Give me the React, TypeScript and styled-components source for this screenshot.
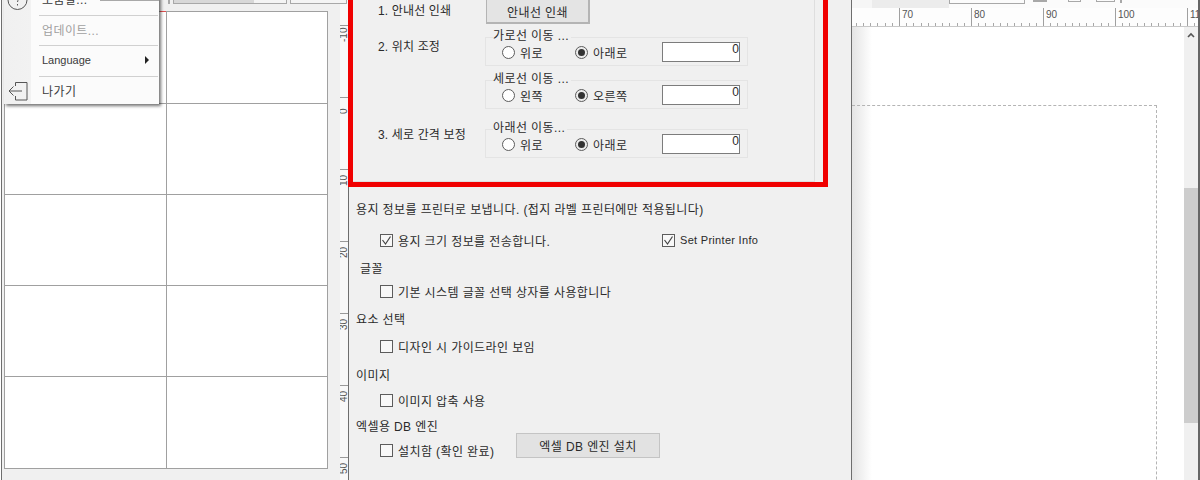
import React from "react";
import styled, { createGlobalStyle } from "styled-components";

const GlobalStyle = createGlobalStyle`
  html, body {
    margin: 0;
    padding: 0;
    background: #fff;
  }

  body {
    font-family: "Liberation Sans", "Noto Sans CJK KR", sans-serif;
    font-size: 12px;
    color: #2a2a2a;
    letter-spacing: 0.4px;
  }
`;

const Page = styled.div`
  width: 1200px;
  height: 480px;
  display: flex;
  overflow: hidden;
`;

/* left pane: label sheet preview */
const LeftPane = styled.section`
  position: relative;
  z-index: 1;
  width: 338px;
  margin-left: 1px;
  flex: none;
  border-left: 1px solid #6e6e6e;
  background: #f0f0f0;
`;

const TopBar = styled.div`
  height: 4px;
  display: flex;
  gap: 3px;
  padding-left: 166px;
`;

const TopBox = styled.div<{ $width: number; $fill?: string }>`
  width: ${(p) => p.$width}px;
  flex: none;
  box-sizing: border-box;
  border: 1px solid #a8a8a8;
  border-top: none;
  background: ${(p) => p.$fill || "#f4f4f4"};
`;

const SheetGrid = styled.div`
  position: relative;
  width: 324px;
  margin: 7px 0 0 2px;
  box-sizing: border-box;
  padding: 1px;
  display: grid;
  grid-template-columns: 161px 160px;
  grid-template-rows: 91px 90px 90px 90px 91px;
  gap: 1px;
  background: #a0a0a0;

  &::before {
    content: "";
    position: absolute;
    top: 0;
    left: 156px;
    width: 6px;
    height: 1px;
    background: #e05050;
  }
`;

const SheetCell = styled.div`
  background: #fff;
`;

const Menu = styled.div`
  position: absolute;
  left: 2px;
  top: -15px;
  width: 155px;
  height: 119px;
  overflow: hidden;
  background: linear-gradient(to right, #f0f0f0 0, #f2f2f2 27px, #fbfbfb 27px);
  box-shadow: 2px 2px 3px rgba(0, 0, 0, 0.55);
`;

const MenuTab = styled.div`
  position: absolute;
  left: 98px;
  top: 0;
  width: 59px;
  height: 1px;
  background: #a8a8a8;
`;

const MenuItem = styled.div<{ $disabled?: boolean }>`
  height: 29.5px;
  box-sizing: border-box;
  padding-bottom: 2px;
  display: flex;
  align-items: center;
  color: ${(p) => (p.$disabled ? "#a0a0a0" : "#3a3a3a")};
`;

const MenuIcon = styled.span`
  width: 22px;
  height: 22px;
  margin: 0 14px 0 2px;
  flex: none;
  display: flex;
  align-items: center;
  justify-content: center;
`;

const MenuArrow = styled.span`
  margin-left: auto;
  margin-right: 10px;
  width: 0;
  height: 0;
  border-left: 4px solid #222;
  border-top: 4px solid transparent;
  border-bottom: 4px solid transparent;
`;

const MenuSeparator = styled.div`
  height: 1px;
  margin: 0 1px 0 35px;
  background: #d0d0d0;
`;

const LatinText = styled.span<{ $spacing: number }>`
  font-size: 11px;
  letter-spacing: ${(p) => p.$spacing}px;
`;

const VerticalRuler = styled.div`
  width: 9px;
  flex: none;
  box-sizing: border-box;
  padding-top: 25px;
  overflow: hidden;
  border-right: 1px solid #6e6e6e;
  background: #f8f8f8;
`;

const VerticalUnit = styled.div`
  height: 72px;
  box-sizing: border-box;
  border-top: 1px solid #999;
  padding-top: 2px;
`;

const VerticalLabel = styled.span`
  display: block;
  writing-mode: vertical-rl;
  transform: rotate(180deg);
  font-size: 10px;
  line-height: 8px;
  letter-spacing: 0;
  color: #555;
  height: 14px;
  text-align: left;
`;

/* settings dialog */
const Dialog = styled.section`
  width: 503px;
  flex: none;
  box-sizing: border-box;
  border-right: 1px solid #6e6e6e;
  background: #f0f0f0;
`;

const RedFrame = styled.div`
  width: 480px;
  height: 207px;
  margin: -20px 0 0 -1px;
  box-sizing: border-box;
  border: 5px solid #f00000;
`;

const GuidePanel = styled.div`
  width: 462px;
  height: 197px;
  box-sizing: border-box;
  padding: 14px 0 0 25px;
  border-right: 1px solid #dedede;
  border-bottom: 1px solid #dedede;
`;

const GuideRow = styled.div<{ $top?: number }>`
  display: flex;
  align-items: flex-start;
  margin-top: ${(p) => p.$top || 0}px;
`;

const GuideLabel = styled.div<{ $top?: number }>`
  width: 107px;
  flex: none;
  line-height: 18px;
  letter-spacing: 0.15px;
  margin-top: ${(p) => p.$top || 0}px;
`;

const PrintButton = styled.button`
  width: 104px;
  height: 25px;
  margin-left: 1px;
  padding: 0;
  font: inherit;
  letter-spacing: inherit;
  color: inherit;
  border: 1px solid #b4b4b4;
  border-bottom-width: 2px;
  border-right-width: 2px;
  background: #e4e4e4;
`;

const GroupStack = styled.div`
  display: flex;
  flex-direction: column;
  gap: 14px;
`;

const Group = styled.div`
  position: relative;
  width: 263px;
  height: 29px;
  box-sizing: border-box;
  padding-left: 16px;
  display: grid;
  grid-template-columns: 73px 87px 78px;
  align-items: center;
  border: 1px solid #e4e4e4;
`;

const GroupLegend = styled.span`
  position: absolute;
  left: 7px;
  top: -10px;
  padding-right: 2px;
  line-height: 16px;
  background: #f0f0f0;
`;

const RadioOption = styled.label`
  display: flex;
  align-items: center;
  gap: 5px;
  margin-top: 1px;
`;

const RadioMark = styled.span<{ $on?: boolean }>`
  width: 13px;
  height: 13px;
  box-sizing: border-box;
  flex: none;
  display: flex;
  align-items: center;
  justify-content: center;
  border: 1px solid #5c5c5c;
  border-radius: 50%;
  background: ${(p) => (p.$on ? "#ececec" : "#fff")};

  &::after {
    content: "";
    display: ${(p) => (p.$on ? "block" : "none")};
    width: 7px;
    height: 7px;
    border-radius: 50%;
    background: #333;
  }
`;

const NumberField = styled.input`
  width: 78px;
  height: 20px;
  box-sizing: border-box;
  padding: 0 0 5px 0;
  font: inherit;
  letter-spacing: 0;
  color: inherit;
  text-align: right;
  background: #fff;
  border: 1px solid #7c7c7c;
  border-radius: 0;
  outline: none;
`;

const OptionsPanel = styled.div`
  padding-left: 7px;
`;

const Heading = styled.div<{ $top: number; $inset?: number }>`
  height: 18px;
  line-height: 20px;
  margin-top: ${(p) => p.$top}px;
  margin-left: ${(p) => p.$inset || 0}px;
`;

const CheckRow = styled.div<{ $top: number }>`
  height: 18px;
  display: flex;
  align-items: center;
  padding-left: 24px;
  margin-top: ${(p) => p.$top}px;
`;

const CheckOption = styled.label<{ $width?: number }>`
  display: flex;
  align-items: center;
  gap: 5px;
  flex: none;
  width: ${(p) => (p.$width ? `${p.$width}px` : "auto")};
`;

const CheckMark = styled.span`
  width: 13px;
  height: 13px;
  box-sizing: border-box;
  flex: none;
  display: flex;
  border: 1px solid #5c5c5c;
  background: #f8f8f8;
`;

const InstallButton = styled.button`
  width: 144px;
  height: 25px;
  margin-top: -9px;
  padding: 0;
  font: inherit;
  letter-spacing: inherit;
  color: inherit;
  border: 1px solid #c4c4c4;
  background: #e2e2e2;
`;

/* right pane: design canvas */
const RightPane = styled.section`
  flex: 1;
  min-width: 0;
  display: flex;
  flex-direction: column;
  border-right: 2px solid #666;
`;

const ToolStrip = styled.div`
  height: 8px;
  flex: none;
  display: flex;
  align-items: flex-start;
  background: linear-gradient(to right, #f6f6f6 0, #f6f6f6 20px, #ececec 20px, #ececec 97px, #fbfbfb 97px);
`;

const ToolBox = styled.div<{ $left: number; $width: number; $height: number; $solid?: boolean }>`
  width: ${(p) => p.$width}px;
  height: ${(p) => p.$height}px;
  margin-left: ${(p) => p.$left}px;
  box-sizing: border-box;
  flex: none;
  border: 1px solid #a8a8a8;
  border-top: none;
  background: ${(p) => (p.$solid ? "#a8a8a8" : "#fbfbfb")};
`;

const Ruler = styled.div`
  height: 19px;
  flex: none;
  display: flex;
  overflow: hidden;
  box-sizing: border-box;
  border-bottom: 1px solid #c8c8c8;
  background: #fdfdfd;
`;

const RulerUnit = styled.div<{ $first?: boolean }>`
  width: 72px;
  flex: none;
  box-sizing: border-box;
  margin-left: ${(p) => (p.$first ? "-25px" : "0")};
  padding: 1px 0 0 2px;
  border-left: 1px solid #a0a0a0;
  font-size: 10px;
  line-height: 12px;
  letter-spacing: 0;
  color: #555;
  background: repeating-linear-gradient(to right, #a8a8a8 0, #a8a8a8 1px, transparent 1px, transparent 7.2px) -1px bottom / 100% 3px no-repeat;
`;

const Workspace = styled.div`
  flex: 1;
  min-height: 0;
  display: flex;
  overflow: hidden;
`;

const Canvas = styled.div`
  flex: 1;
  box-sizing: border-box;
  padding-top: 78px;
  background: linear-gradient(to right, #e4e4e4 0, #fff 20px);
`;

const Paper = styled.div`
  width: 305px;
  height: 500px;
  box-sizing: border-box;
  border-top: 1px dashed #b4b4b4;
  border-right: 1px dashed #b4b4b4;
`;

const ScrollTrack = styled.div`
  width: 14px;
  flex: none;
  background: #f0f0f0;
`;

const ScrollArrow = styled.div`
  height: 16px;
  display: flex;
  align-items: center;
  justify-content: center;
`;

const ScrollThumb = styled.div`
  height: 235px;
  margin-top: 145px;
  background: #cdcdcd;
`;

const rulerMarks = ["", "70", "80", "90", "100", "110"];
const verticalMarks = ["-10", "0", "10", "20", "30", "40", "50"];

function HelpIcon() {
  return (
    <svg width="22" height="22" viewBox="0 0 22 22" fill="none" stroke="#555" strokeWidth="1">
      <circle cx="11.5" cy="12" r="9.5" />
      <path d="M9 9.5c0-3 5-3 5 0 0 2-2.5 2-2.5 4.5M11.5 16v1.5" />
    </svg>
  );
}

function ExitIcon() {
  return (
    <svg width="22" height="22" viewBox="0 0 22 22" fill="none" stroke="#555" strokeWidth="1">
      <path d="M9.5 7V3.5h11.5v17.5H9.5V17" />
      <path d="M3 12h13M7.5 7.5 3 12l4.5 4.5" />
    </svg>
  );
}

function TickIcon() {
  return (
    <svg width="11" height="11" viewBox="0 0 11 11" fill="none" stroke="#444" strokeWidth="1.2">
      <path d="M1.5 5 4.5 9 9.5 1.5" />
    </svg>
  );
}

function Radio({ label, on }: { label: string; on?: boolean }) {
  return (
    <RadioOption>
      <RadioMark $on={on} />
      {label}
    </RadioOption>
  );
}

function MoveGroup({ legend, first, second }: { legend: string; first: string; second: string }) {
  return (
    <Group>
      <GroupLegend>{legend}</GroupLegend>
      <Radio label={first} />
      <Radio label={second} on />
      <NumberField readOnly value="0" />
    </Group>
  );
}

function Check({ label, on, width }: { label: React.ReactNode; on?: boolean; width?: number }) {
  return (
    <CheckOption $width={width}>
      <CheckMark>{on && <TickIcon />}</CheckMark>
      {label}
    </CheckOption>
  );
}

function App() {
  return (
    <Page>
      <GlobalStyle />

      <LeftPane>
        <TopBar>
          <TopBox $width={2} />
          <TopBox $width={114} $fill="linear-gradient(to right, #d8d8d8 80px, #f4f4f4 80px)" />
          <TopBox $width={57} />
        </TopBar>
        <SheetGrid>
          {Array.from({ length: 10 }, (_, i) => (
            <SheetCell key={i} />
          ))}
        </SheetGrid>
        <Menu>
          <MenuItem>
            <MenuIcon>
              <HelpIcon />
            </MenuIcon>
            도움말...
          </MenuItem>
          <MenuSeparator />
          <MenuItem $disabled>
            <MenuIcon />
            업데이트...
          </MenuItem>
          <MenuSeparator />
          <MenuItem>
            <MenuIcon />
            <LatinText $spacing={0}>Language</LatinText>
            <MenuArrow />
          </MenuItem>
          <MenuSeparator />
          <MenuItem>
            <MenuIcon>
              <ExitIcon />
            </MenuIcon>
            나가기
          </MenuItem>
        </Menu>
        <MenuTab />
      </LeftPane>

      <VerticalRuler>
        {verticalMarks.map((mark) => (
          <VerticalUnit key={mark}>
            <VerticalLabel>{mark}</VerticalLabel>
          </VerticalUnit>
        ))}
      </VerticalRuler>

      <Dialog>
        <RedFrame>
          <GuidePanel>
            <GuideRow>
              <GuideLabel $top={3}>1. 안내선 인쇄</GuideLabel>
              <PrintButton>안내선 인쇄</PrintButton>
            </GuideRow>
            <GuideRow $top={13}>
              <GuideLabel $top={1}>2. 위치 조정</GuideLabel>
              <GroupStack>
                <MoveGroup legend="가로선 이동 ..." first="위로" second="아래로" />
                <MoveGroup legend="세로선 이동 ..." first="왼쪽" second="오른쪽" />
              </GroupStack>
            </GuideRow>
            <GuideRow $top={20}>
              <GuideLabel $top={-3}>3. 세로 간격 보정</GuideLabel>
              <MoveGroup legend="아래선 이동..." first="위로" second="아래로" />
            </GuideRow>
          </GuidePanel>
        </RedFrame>

        <OptionsPanel>
          <Heading $top={13}>용지 정보를 프린터로 보냅니다. (접지 라벨 프린터에만 적용됩니다)</Heading>
          <CheckRow $top={13}>
            <Check label="용지 크기 정보를 전송합니다." on width={282} />
            <Check label={<LatinText $spacing={0.3}>Set Printer Info</LatinText>} on />
          </CheckRow>
          <Heading $top={10} $inset={4}>
            글꼴
          </Heading>
          <CheckRow $top={5}>
            <Check label="기본 시스템 글꼴 선택 상자를 사용합니다" />
          </CheckRow>
          <Heading $top={10}>요소 선택</Heading>
          <CheckRow $top={9}>
            <Check label="디자인 시 가이드라인 보임" />
          </CheckRow>
          <Heading $top={11}>이미지</Heading>
          <CheckRow $top={7}>
            <Check label="이미지 압축 사용" />
          </CheckRow>
          <Heading $top={8}>엑셀용 DB 엔진</Heading>
          <CheckRow $top={6}>
            <Check label="설치함 (확인 완료)" width={136} />
            <InstallButton>엑셀 DB 엔진 설치</InstallButton>
          </CheckRow>
        </OptionsPanel>
      </Dialog>

      <RightPane>
        <ToolStrip>
          <ToolBox $left={97} $width={76} $height={4} />
          <ToolBox $left={8} $width={14} $height={2} $solid />
          <ToolBox $left={21} $width={13} $height={2} />
          <ToolBox $left={15} $width={19} $height={2} />
          <ToolBox $left={5} $width={1} $height={3} $solid />
        </ToolStrip>
        <Ruler>
          {rulerMarks.map((mark, i) => (
            <RulerUnit key={i} $first={i === 0}>
              {mark}
            </RulerUnit>
          ))}
        </Ruler>
        <Workspace>
          <Canvas>
            <Paper />
          </Canvas>
          <ScrollTrack>
            <ScrollArrow>
              <svg width="8" height="6" viewBox="0 0 8 6" fill="none" stroke="#555" strokeWidth="1.6">
                <path d="M1 5 4 2l3 3" />
              </svg>
            </ScrollArrow>
            <ScrollThumb />
          </ScrollTrack>
        </Workspace>
      </RightPane>
    </Page>
  );
}

export default App;
